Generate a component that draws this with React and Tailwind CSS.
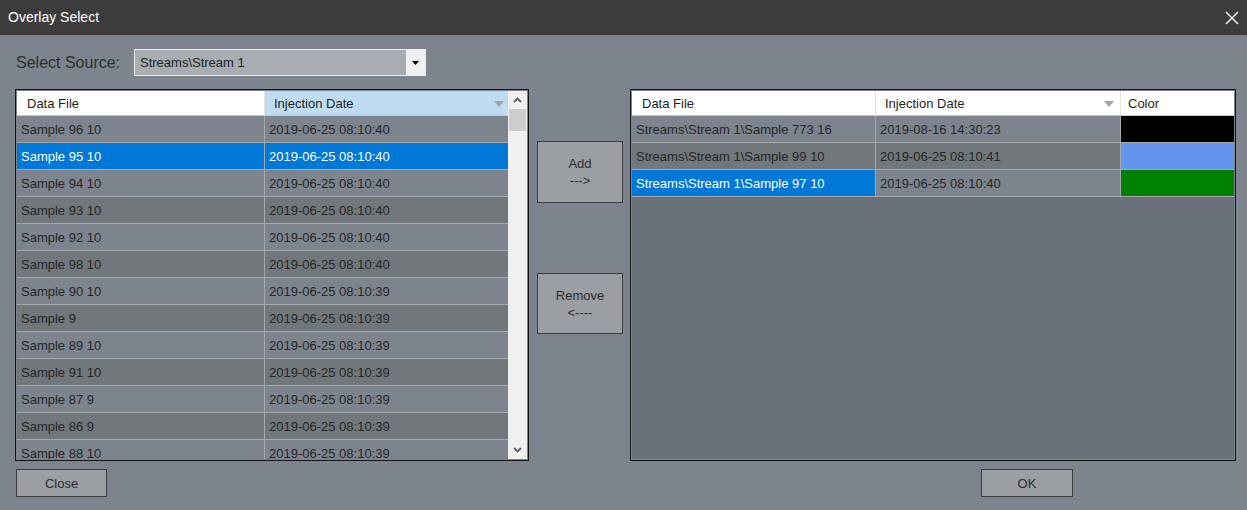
import React from 'react';

const sourceRows = [
  { name: 'Sample 96 10', date: '2019-06-25 08:10:40' },
  { name: 'Sample 95 10', date: '2019-06-25 08:10:40', selected: true },
  { name: 'Sample 94 10', date: '2019-06-25 08:10:40' },
  { name: 'Sample 93 10', date: '2019-06-25 08:10:40' },
  { name: 'Sample 92 10', date: '2019-06-25 08:10:40' },
  { name: 'Sample 98 10', date: '2019-06-25 08:10:40' },
  { name: 'Sample 90 10', date: '2019-06-25 08:10:39' },
  { name: 'Sample 9', date: '2019-06-25 08:10:39' },
  { name: 'Sample 89 10', date: '2019-06-25 08:10:39' },
  { name: 'Sample 91 10', date: '2019-06-25 08:10:39' },
  { name: 'Sample 87 9', date: '2019-06-25 08:10:39' },
  { name: 'Sample 86 9', date: '2019-06-25 08:10:39' },
  { name: 'Sample 88 10', date: '2019-06-25 08:10:39' },
];

const overlayRows = [
  { name: 'Streams\\Stream 1\\Sample 773 16', date: '2019-08-16 14:30:23', color: 'bg-[#000000]' },
  { name: 'Streams\\Stream 1\\Sample 99 10', date: '2019-06-25 08:10:41', color: 'bg-[#6495ed]' },
  { name: 'Streams\\Stream 1\\Sample 97 10', date: '2019-06-25 08:10:40', color: 'bg-[#008000]', selected: true },
];

const SortArrow = () => (
  <svg width="10" height="6" viewBox="0 0 10 6" className="shrink-0">
    <path d="M0 0 H10 L5 6 Z" fill="#a3a3a3" />
  </svg>
);

const Chevron = ({ up }) => (
  <svg width="9" height="6" viewBox="0 0 9 6">
    <path
      d={up ? 'M1 5 L4.5 1.5 L8 5' : 'M1 1 L4.5 4.5 L8 1'}
      fill="none"
      stroke="#606060"
      strokeWidth="1.8"
    />
  </svg>
);

const DlgButton = ({ children, className = '' }) => (
  <button
    className={`border border-[#3c3c3c] bg-[#9b9ea3] text-[13px] leading-[17px] text-[#2c2c2c] flex flex-col items-center justify-center ${className}`}
  >
    {children}
  </button>
);

function rowBg(i, selected) {
  if (selected) return 'bg-[#0078d7] text-white';
  return i % 2 === 0 ? 'bg-[#7e848d] text-[#262626]' : 'bg-[#71777a] text-[#262626]';
}

export default function App() {
  return (
    <div
      className="w-[1247px] h-[510px] bg-[#7e848d] flex flex-col overflow-hidden"
      style={{ fontFamily: '"Liberation Sans", Arial, sans-serif' }}
    >
      {/* title bar */}
      <div className="h-[35px] bg-[#3c3c3c] flex items-center justify-between pl-[8px] pr-[8px] shrink-0">
        <span className="text-[14px] text-white">Overlay Select</span>
        <svg width="14" height="14" viewBox="0 0 14 14">
          <path d="M1 1 L13 13 M13 1 L1 13" stroke="#e8e8e8" strokeWidth="1.6" />
        </svg>
      </div>

      {/* source picker */}
      <div className="mt-[14px] h-[27px] flex items-center pl-[16px] shrink-0">
        <span className="text-[16px] text-[#2e2e2e] w-[118px]">Select Source:</span>
        <div className="w-[292px] h-[27px] border border-[#ececec] flex">
          <div className="flex-1 bg-[#a9acb1] flex items-center pl-[5px] pt-px text-[13px] text-[#1e1e1e]">
            Streams\Stream 1
          </div>
          <div className="w-[19px] bg-[#f0f0f0] flex items-center justify-center">
            <svg width="7" height="4" viewBox="0 0 7 4">
              <path d="M0 0 H7 L3.5 4 Z" fill="#000" />
            </svg>
          </div>
        </div>
      </div>

      {/* grids */}
      <div className="mt-[13px] h-[372px] flex pl-[15px] shrink-0">
        {/* available samples */}
        <div className="w-[514px] h-full border border-[#141414] p-px flex">
          <div className="flex-1 flex flex-col overflow-hidden">
            <div className="h-[25px] shrink-0 flex bg-white border-b border-[#c8c8c8] text-[13px] text-[#1e1e1e]">
              <div className="w-[248px] flex items-center pl-[10px] pt-[2px] border-r border-[#e3e3e3]">Data File</div>
              <div className="flex-1 flex items-center justify-between pl-[9px] pr-[4px] pt-[2px] bg-[#bfdcf3]">
                <span>Injection Date</span>
                <SortArrow />
              </div>
            </div>
            {sourceRows.map((r, i) => (
              <div
                key={r.name}
                className={`h-[27px] shrink-0 flex text-[13px] border-b border-[#a6a9ab] ${rowBg(i, r.selected)}`}
              >
                <div className="w-[248px] flex items-center pl-[4px] pt-px border-r border-[#a6a9ab]">{r.name}</div>
                <div className="flex-1 flex items-center pl-[4px] pt-px">{r.date}</div>
              </div>
            ))}
          </div>
          <div className="w-[19px] bg-[#f0f0f0] flex flex-col items-center">
            <div className="h-[18px] flex items-center justify-center">
              <Chevron up />
            </div>
            <div className="w-[17px] h-[22px] bg-[#cdcdcd]" />
            <div className="flex-1" />
            <div className="h-[18px] flex items-center justify-center">
              <Chevron />
            </div>
          </div>
        </div>

        {/* add / remove */}
        <div className="w-[101px] flex flex-col pl-[8px]">
          <DlgButton className="mt-[52px] w-[86px] h-[62px]">
            <span>Add</span>
            <span>---&gt;</span>
          </DlgButton>
          <DlgButton className="mt-[70px] w-[86px] h-[61px]">
            <span>Remove</span>
            <span>&lt;----</span>
          </DlgButton>
        </div>

        {/* overlay list */}
        <div className="w-[606px] h-full border border-[#141414] p-px bg-[#7e848d]">
          <div className="h-full flex flex-col bg-[#6a707a] overflow-hidden">
            <div className="h-[25px] shrink-0 flex bg-white border-b border-[#c8c8c8] text-[13px] text-[#1e1e1e]">
              <div className="w-[244px] flex items-center pl-[10px] pt-[2px] border-r border-[#e3e3e3]">Data File</div>
              <div className="w-[245px] flex items-center justify-between pl-[9px] pr-[6px] pt-[2px] border-r border-[#e3e3e3]">
                <span>Injection Date</span>
                <SortArrow />
              </div>
              <div className="flex-1 flex items-center pl-[7px] pt-[2px]">Color</div>
            </div>
            {overlayRows.map((r, i) => (
              <div key={r.name} className="h-[27px] shrink-0 flex text-[13px] border-b border-[#a6a9ab]">
                <div className={`w-[244px] flex items-center pl-[4px] pt-px border-r border-[#a6a9ab] ${rowBg(i, r.selected)}`}>
                  {r.name}
                </div>
                <div className={`w-[245px] flex items-center pl-[4px] pt-px border-r border-[#a6a9ab] ${rowBg(i, false)}`}>
                  {r.date}
                </div>
                <div className={`flex-1 ${r.color}`} />
              </div>
            ))}
          </div>
        </div>
      </div>

      {/* footer buttons */}
      <div className="mt-[8px] flex pl-[16px] shrink-0">
        <DlgButton className="w-[91px] h-[28px]">Close</DlgButton>
        <DlgButton className="ml-[874px] w-[92px] h-[28px]">OK</DlgButton>
      </div>
    </div>
  );
}
